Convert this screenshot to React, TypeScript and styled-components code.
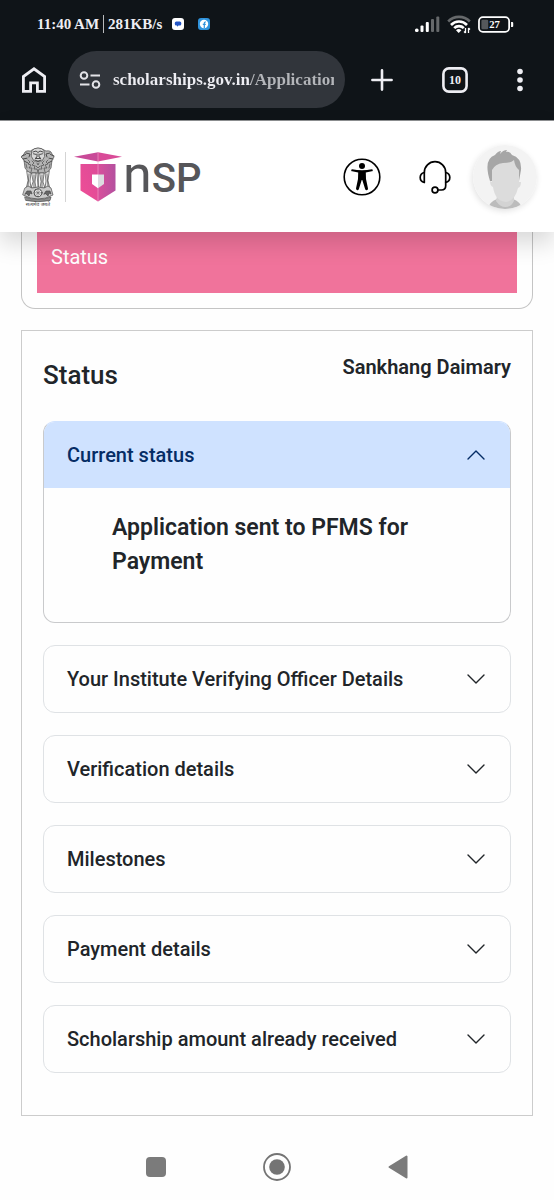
import React, { useState } from "react";
import styled, { createGlobalStyle } from "styled-components";

const GlobalStyle = createGlobalStyle`
  *, *::before, *::after { box-sizing: border-box; }
  body {
    margin: 0;
    background: #fefefe;
    color: #212529;
    font-family: Roboto, "Liberation Sans", sans-serif;
    font-size: 20px;
  }
  button, input { font: inherit; color: inherit; }
  h1, h2, h3, p { margin: 0; }
`;

const displayFace = `"Liberation Serif", serif`;

const Page = styled.div`
  display: flex;
  flex-direction: column;
  min-height: 100vh;
`;

const BrowserChrome = styled.div`
  background: #0f1418;
  color: #eeeef3;
  border-bottom: 1px solid #8f9193;
  font-family: ${displayFace};
  font-weight: 700;
`;

const StatusBar = styled.div`
  display: flex;
  align-items: center;
  justify-content: space-between;
  height: 48px;
  padding: 0 40px 0 37px;
`;

const StatusGroup = styled.div<{ $gap: number }>`
  display: flex;
  align-items: center;
  gap: ${(p) => p.$gap}px;
  font-size: 15px;
  line-height: 20px;
  white-space: nowrap;
`;

const Divider = styled.span`
  width: 1px;
  height: 18px;
  background: #b9bbbd;
`;

const Toolbar = styled.div`
  display: flex;
  align-items: center;
  padding: 3px 31px 12px 22px;
  gap: 22px;
`;

const IconButton = styled.button`
  display: flex;
  align-items: center;
  justify-content: center;
  flex: none;
  padding: 0;
  border: 0;
  background: none;
  cursor: pointer;
`;

const AddressBar = styled.label`
  display: flex;
  align-items: center;
  flex: 1;
  min-width: 0;
  height: 57px;
  padding: 0 11px;
  gap: 12px;
  border-radius: 29px;
  background: #31353b;
`;

const AddressInput = styled.input`
  flex: 1;
  min-width: 0;
  height: 32px;
  padding: 0;
  border: 0;
  outline: 0;
  font-size: 17px;
  background: linear-gradient(90deg, #eeeef3 137px, #b4b6ba 138px);
  background-clip: text;
  -webkit-text-fill-color: transparent;
`;

const ToolbarActions = styled.div`
  display: flex;
  align-items: center;
  gap: 49px;
  padding-left: 4px;
`;

const SiteHeader = styled.header`
  position: relative;
  z-index: 1;
  display: flex;
  align-items: center;
  justify-content: space-between;
  height: 111px;
  padding: 0 17px 0 20px;
  background: #fff;
  box-shadow: 0 11px 22px rgba(0, 0, 0, 0.15);
`;

const Brand = styled.a`
  display: flex;
  align-items: center;
  color: #565659;
  text-decoration: none;
`;

const BrandRule = styled.span`
  width: 1px;
  height: 50px;
  margin: 0 8px 0 9px;
  background: #d4d4d4;
`;

const Wordmark = styled.span`
  padding-left: 1px;
  font-family: Roboto, sans-serif;
  font-weight: 500;
  font-size: 40px;
  line-height: 56px;
`;

const WordmarkInitial = styled.span`
  font-size: 52px;
  font-weight: 400;
`;

const HeaderActions = styled.div`
  display: flex;
  align-items: center;
`;

const Actions = styled.div`
  display: flex;
  gap: 38px;
  margin-right: 22px;
`;

const Avatar = styled(IconButton)`
  width: 64px;
  height: 64px;
  border-radius: 50%;
  box-shadow: -1px 2px 6px rgba(0, 0, 0, 0.12);
  overflow: hidden;
`;

const Main = styled.main`
  display: flex;
  flex-direction: column;
  gap: 21px;
  padding: 0 21px;
`;

const MenuCard = styled.nav`
  padding: 0 15px 15px;
  border: 1px solid #c4c4c4;
  border-top: 0;
  border-radius: 0 0 14px 14px;
`;

const MenuItem = styled.a`
  display: block;
  padding: 10px 14px 21px;
  background: #f0739b;
  color: #fff;
  line-height: 30px;
  text-decoration: none;
`;

const StatusCard = styled.section`
  padding: 22px 21px 42px;
  border: 1px solid #cccccc;
`;

const CardHeading = styled.div`
  display: flex;
  align-items: flex-start;
  justify-content: space-between;
  margin-bottom: 30px;
`;

const Title = styled.h1`
  padding-top: 6px;
  font-size: 26px;
  font-weight: 500;
  line-height: 32px;
`;

const Applicant = styled.p`
  font-size: 20px;
  font-weight: 600;
  line-height: 28px;
`;

const Accordion = styled.div`
  display: flex;
  flex-direction: column;
  gap: 22px;
`;

const Item = styled.section<{ $open: boolean }>`
  border: 1px solid ${(p) => (p.$open ? "#c9cacc" : "#dfe2e5")};
  ${(p) => p.$open && "border-top-color: #cfe2ff;"}
  border-radius: 12px;
  overflow: hidden;
`;

const ItemHeading = styled.h2`
  font-size: 20px;
  font-weight: 500;
`;

const ItemButton = styled.button<{ $open: boolean }>`
  display: flex;
  align-items: center;
  justify-content: space-between;
  width: 100%;
  padding: 18px 24px 18px 23px;
  border: 0;
  background: ${(p) => (p.$open ? "#cfe2ff" : "transparent")};
  color: ${(p) => (p.$open ? "#052c65" : "#212529")};
  font-weight: 500;
  line-height: 30px;
  text-align: left;
  cursor: pointer;
`;

const ItemBody = styled.div`
  padding: 23px 68px 43px;
  font-size: 23px;
  font-weight: 600;
  line-height: 34px;
`;

const SystemNav = styled.nav`
  display: grid;
  grid-template-columns: repeat(3, 121px);
  justify-content: center;
  margin-top: auto;
  padding: 16px 0 19px;
`;

const Chevron = ({ open }: { open: boolean }) => (
  <svg width="20" height="12" viewBox="0 0 20 12" fill="none" stroke="currentColor" strokeWidth="1.4" strokeLinecap="round" strokeLinejoin="round" aria-hidden="true">
    <path d={open ? "M2 10 10 2l8 8" : "M2 2l8 8 8-8"} />
  </svg>
);

const Signal = () => (
  <svg width="25" height="17" viewBox="0 0 25 17" aria-hidden="true">
    <g fill="#fff">
      <rect x="0" y="12.5" width="3.6" height="3.5" rx="1.6" />
      <rect x="5.5" y="9.5" width="3" height="6.5" rx="1" />
      <rect x="10.8" y="6" width="3" height="10" rx="1" />
    </g>
    <g fill="#66696b">
      <rect x="16" y="3" width="3" height="13" rx="1" />
      <rect x="21.3" y="0.5" width="3" height="15.5" rx="1" />
    </g>
  </svg>
);

const Wifi = () => (
  <svg width="24" height="19" viewBox="0 0 24 19" fill="none" strokeWidth="2.6" aria-hidden="true">
    <path d="M1.2 6.5a15 15 0 0 1 21.6 0" stroke="#66696b" />
    <path d="M4 10a11 11 0 0 1 16 0M7.2 13.2a6.6 6.6 0 0 1 9.6 0" stroke="#fff" />
    <path d="M9 15.2a4.2 4.2 0 0 1 5.4 0l-2.7 2.9z" fill="#fff" />
    <path d="M18.5 13v5M17 16.5l1.5 1.5M21.5 18v-5M23 14.5l-1.5-1.5" stroke="#fff" strokeWidth="1.3" />
  </svg>
);

const Battery = () => (
  <svg width="36" height="17" viewBox="0 0 37 17" aria-hidden="true">
    <rect x="1" y="1" width="31" height="15" rx="4" fill="none" stroke="#fff" strokeWidth="1.8" />
    <rect x="3.5" y="3.5" width="7" height="10" rx="1.5" fill="#55585b" />
    <path d="M34 6h1.2a1 1 0 0 1 1 1v3a1 1 0 0 1-1 1H34z" fill="#fff" />
    <text x="17" y="12" textAnchor="middle" fill="#fff" fontFamily="Liberation Serif" fontWeight="700" fontSize="11">27</text>
  </svg>
);

const ChatBadge = () => (
  <svg width="12" height="12" viewBox="0 0 12 12" aria-hidden="true">
    <rect width="12" height="12" rx="3" fill="#fff" />
    <path d="M4.3 3.5h3.5a1.5 1.5 0 0 1 1.5 1.5v1a1.5 1.5 0 0 1-1.5 1.5H6.5L5 8.8V7.5h-.7a1.5 1.5 0 0 1-1.5-1.5V5a1.5 1.5 0 0 1 1.5-1.5z" fill="#2456c5" />
  </svg>
);

const SocialBadge = () => (
  <svg width="12" height="12" viewBox="0 0 12 12" aria-hidden="true">
    <rect width="12" height="12" rx="3" fill="#2f93dc" />
    <circle cx="6" cy="6" r="4.2" fill="#fff" />
    <path d="M8 4h-.8q-.9 0-.9 1v5M4.8 6.3h3" stroke="#2f93dc" strokeWidth="1.2" fill="none" />
  </svg>
);

const Home = () => (
  <svg width="24" height="26" viewBox="0 0 24 26" fill="none" stroke="currentColor" strokeWidth="2.8" aria-hidden="true">
    <path d="M1.4 24.4V9.5L12 1.8l10.6 7.7v14.9h-7.2v-8.6H8.6v8.6z" />
  </svg>
);

const SiteControls = () => (
  <svg width="22" height="18" viewBox="0 0 22 18" fill="none" stroke="#e3e3e8" strokeWidth="2" aria-hidden="true">
    <circle cx="5" cy="4.500" r="3.3" />
    <path d="M11.5 4.5H21M1 13.5h9.5" />
    <circle cx="17" cy="13.5" r="3.3" />
  </svg>
);

const Plus = () => (
  <svg width="22" height="22" viewBox="0 0 22 22" stroke="currentColor" strokeWidth="2.6" strokeLinecap="round" aria-hidden="true">
    <path d="M11 1.4v19.2M1.4 11h19.2" />
  </svg>
);

const TabCount = () => (
  <svg width="26" height="26" viewBox="0 0 26 26" aria-hidden="true">
    <rect x="1.4" y="1.4" width="23.2" height="23.2" rx="5.5" fill="none" stroke="currentColor" strokeWidth="2.6" />
    <text x="13" y="17" textAnchor="middle" fill="currentColor" fontFamily="Liberation Serif" fontWeight="700" fontSize="12">10</text>
  </svg>
);

const Dots = () => (
  <svg width="6" height="24" viewBox="0 0 6 24" fill="currentColor" aria-hidden="true">
    <circle cx="3" cy="3.5" r="2.8" />
    <circle cx="3" cy="12" r="2.8" />
    <circle cx="3" cy="20.5" r="2.8" />
  </svg>
);

const Emblem = () => (
  <svg width="36" height="60" viewBox="0 0 36 60" role="img" aria-label="State Emblem of India">
    <g stroke="#4c4c4c" strokeWidth="0.7" strokeLinejoin="round" strokeLinecap="round">
      <path d="M12 3Q18-.8 24 3l2 1q5-1 6 3l2 3-2 3-1 8-4 5H9l-4-5-1-8-3-3 3-3q1-4 6-3z" fill="#b4b4b4" />
      <path d="M12 3.5q2-2.500 6-2.500t6 2.500l.6 6-2.600 4.500h-8l-2.600-4.500z" fill="#d8d8d8" />
      <path d="M13 5l3-1 2 1.500L20 4l3 1M13.500 6.800l2.500.6M22.500 6.800l-2.500.6M17 7v3l-2 1.500h6L19 10V7M15 13l3 1.500 3-1.500" fill="none" strokeWidth="1" />
      <path d="M2 9l3.500-1.500M3 12l4-.8M4 14l4 2M34 9l-3.500-1.500M33 12l-4-.8M32 14l-4 2M6 6l4 1-1 3M30 6l-4 1 1 3" fill="none" strokeWidth="1" />
      <path d="M8 13l2 2-2 2 3 1-2 3 3 0-1 4M28 13l-2 2 2 2-3 1 2 3-3 0 1 4M12 14l2 2-2 2 3 1-1 3 3 0 1 3M24 14l-2 2 2 2-3 1 1 3-3 0-1 3M17 16l1 2 1-2M16 19l2 2 2-2M6 17l1 4M30 17l-1 4" fill="none" />
      <path d="M7 24l4 2-1 8 1 7-5 1 2-8zM12 26h4l-1 9 1 6h-5l2-6zM20 26h4l-1 9 2 6h-5l1-6zM29 24l-4 2 1 8-1 7 5 1-2-8z" fill="#e6e6e6" />
      <path d="M9 27l-1 12M14 28v12M22 28v12M27 27l1 12M17 26l1 14M18.600 26v14" fill="none" />
      <path d="M5 41l3-2 4 2 6-1 6 1 4-2 3 2 2 7q-7 4-15 4T3 48z" fill="#c9c9c9" />
      <path d="M5 50q13 5 26 0l-1 3.500q-12 2.500-24 0z" fill="#8e8e8e" />
      <circle cx="18" cy="45.800" r="4" fill="#eee" strokeWidth="1" />
      <path d="M18 42v7.600M14.200 45.800h7.600M15.400 43.200l5.200 5.200M20.600 43.200l-5.200 5.200" strokeWidth="0.5" />
      <path d="M5 47l2-3 4 0 1 3-2-1-1 3-2-2zM24 47l2-3 4 0 1 3-2-1-1 3-2-2z" fill="#666" />
    </g>
    <text x="18" y="59" textAnchor="middle" fontSize="5" fontFamily="Noto Sans, sans-serif" fill="#333" textRendering="geometricPrecision">सत्यमेव जयते</text>
  </svg>
);

const Shield = () => (
  <svg width="48" height="50" viewBox="0 0 48 50" aria-hidden="true">
    <defs>
      <linearGradient id="shieldShade" x1="0" x2="1" y1="0" y2="0">
        <stop offset="0" stopColor="#d94f9b" />
        <stop offset="1" stopColor="#b4509f" />
      </linearGradient>
      <linearGradient id="shieldLight" x1="1" x2="0" y1="0" y2="1">
        <stop offset="0" stopColor="#dc4b98" />
        <stop offset="1" stopColor="#f04e96" />
      </linearGradient>
    </defs>
    <path d="M0 4.800 24 .3v9.200z" fill="#c94a98" />
    <path d="M24 .3l24 4.500-24 4.700z" fill="#d94b98" />
    <path d="M6.500 12H24v37.500L6.500 38.500z" fill="url(#shieldLight)" />
    <path d="M24 12h17.500v26.500L24 49.500z" fill="url(#shieldShade)" />
    <path d="M24 .3v49" stroke="#f3a6cd" strokeWidth="0.6" />
    <path d="M18 22.500h6v13.700L18 32z" fill="#fff" />
    <path d="M24 22.500h6V32l-6 4.200z" fill="#dcdce0" />
  </svg>
);

const Accessibility = () => (
  <svg width="38" height="38" viewBox="0 0 38 38" aria-hidden="true">
    <circle cx="19" cy="19" r="17.8" fill="none" stroke="#000" strokeWidth="1.6" />
    <circle cx="19" cy="8" r="3" />
    <path d="M9 11.200q10 2.300 20 0 1 .3.800 1.200-.3.800-1 .9l-6 1.100.2 6.600 2 9.600q0 1.500-1.200 1.600-1.200.1-1.600-1L19.300 22h-.6l-2.900 9.200q-.5 1.100-1.600 1-1.200-.2-1.200-1.600l2-9.600.2-6.600-6-1.100q-.8-.1-1-.9-.1-.9.800-1.200z" />
  </svg>
);

const Headset = () => (
  <svg width="32" height="34" viewBox="0 0 32 34" fill="none" stroke="#000" strokeWidth="1.7" strokeLinecap="round" strokeLinejoin="round" aria-hidden="true">
    <path d="M5.300 22.300V12.400a10.700 10.700 0 0 1 21.400 0v13.300q0 4.300-4.300 4.300h-3.600" />
    <path d="M5.300 12.500Q1.200 13.500 1.200 17.500t4.100 4.800M26.700 12.500q4.100 1 4.100 5t-4.100 4.800" />
    <circle cx="16" cy="30" r="2.9" />
  </svg>
);

const Portrait = () => (
  <svg width="64" height="64" viewBox="0 0 64 64" aria-hidden="true">
    <rect width="64" height="64" fill="#f3f3f3" />
    <path d="M15 64q1-7 9-10h16q8 3 9 10z" fill="#bcbcbc" />
    <path d="M24 51h17v5q-3 6-8.500 6T23 56z" fill="#d3d3d3" />
    <path d="M17 36Q10 14 22 10q3-4 6-4l-1 3q3-4 7-4l-1 2q4-1 6 3 10 3 9 15l-2 11z" fill="#a6a6a6" />
    <path d="M19 37V25q3-6 11-7 8 0 11-3 1 7 5 10v12l2 0q0 5-3 6-3 13-12 14-11-1-13-15-3-1-3-6z" fill="#dcdcdc" />
  </svg>
);

const sections = [
  { title: "Current status", body: "Application sent to PFMS for Payment" },
  { title: "Your Institute Verifying Officer Details" },
  { title: "Verification details" },
  { title: "Milestones" },
  { title: "Payment details" },
  { title: "Scholarship amount already received" },
];

export default function App() {
  const [openIndex, setOpenIndex] = useState(0);

  return (
    <Page>
      <GlobalStyle />
      <BrowserChrome>
        <StatusBar>
          <StatusGroup $gap={4}>
            <span>11:40 AM</span>
            <Divider />
            <StatusGroup $gap={10}>
              <span>281KB/s</span>
              <StatusGroup $gap={14}>
                <ChatBadge />
                <SocialBadge />
              </StatusGroup>
            </StatusGroup>
          </StatusGroup>
          <StatusGroup $gap={7}>
            <Signal />
            <Wifi />
            <Battery />
          </StatusGroup>
        </StatusBar>
        <Toolbar>
          <IconButton aria-label="Home"><Home /></IconButton>
          <AddressBar>
            <SiteControls />
            <AddressInput aria-label="Address" defaultValue="scholarships.gov.in/Application" />
          </AddressBar>
          <ToolbarActions>
            <IconButton aria-label="New tab"><Plus /></IconButton>
            <IconButton aria-label="Tabs"><TabCount /></IconButton>
            <IconButton aria-label="More"><Dots /></IconButton>
          </ToolbarActions>
        </Toolbar>
      </BrowserChrome>

      <SiteHeader>
        <Brand href="#">
          <Emblem />
          <BrandRule />
          <Shield />
          <Wordmark><WordmarkInitial>n</WordmarkInitial>SP</Wordmark>
        </Brand>
        <HeaderActions>
          <Actions>
            <IconButton aria-label="Accessibility"><Accessibility /></IconButton>
            <IconButton aria-label="Helpdesk"><Headset /></IconButton>
          </Actions>
          <Avatar aria-label="Profile"><Portrait /></Avatar>
        </HeaderActions>
      </SiteHeader>

      <Main>
        <MenuCard>
          <MenuItem href="#status">Status</MenuItem>
        </MenuCard>
        <StatusCard id="status">
          <CardHeading>
            <Title>Status</Title>
            <Applicant>Sankhang Daimary</Applicant>
          </CardHeading>
          <Accordion>
            {sections.map((section, index) => {
              const open = index === openIndex;
              return (
                <Item key={section.title} $open={open}>
                  <ItemHeading>
                    <ItemButton $open={open} aria-expanded={open} onClick={() => setOpenIndex(open ? -1 : index)}>
                      {section.title}
                      <Chevron open={open} />
                    </ItemButton>
                  </ItemHeading>
                  {open && section.body && <ItemBody>{section.body}</ItemBody>}
                </Item>
              );
            })}
          </Accordion>
        </StatusCard>
      </Main>

      <SystemNav aria-label="System navigation">
        <IconButton aria-label="Recent apps">
          <svg width="20" height="20" viewBox="0 0 20 20"><rect width="20" height="20" rx="4" fill="#7b7b7b" /></svg>
        </IconButton>
        <IconButton aria-label="Home screen">
          <svg width="28" height="28" viewBox="0 0 28 28"><circle cx="14" cy="14" r="13" fill="none" stroke="#747474" strokeWidth="1.8" /><circle cx="14" cy="14" r="7.8" fill="#747474" /></svg>
        </IconButton>
        <IconButton aria-label="Back">
          <svg width="20" height="24" viewBox="0 0 20 24"><path d="M18.500 1.500v21L1.500 12z" fill="#7b7b7b" stroke="#7b7b7b" strokeWidth="2" strokeLinejoin="round" /></svg>
        </IconButton>
      </SystemNav>
    </Page>
  );
}
